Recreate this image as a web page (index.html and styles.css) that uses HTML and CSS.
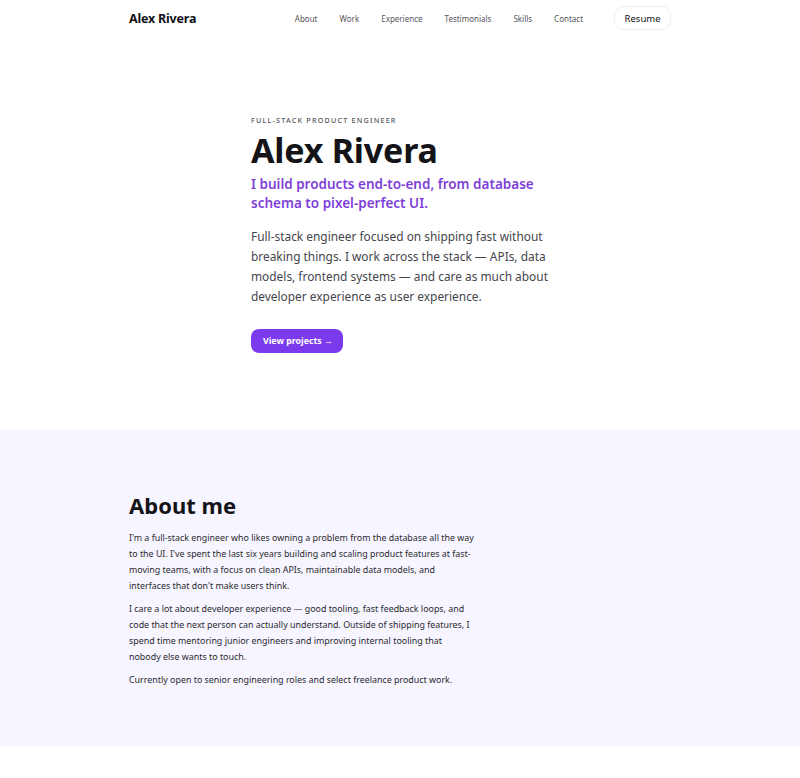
FILE: index.html
```html
<!DOCTYPE html>
<html lang="en">
<head>
<meta charset="utf-8">
<title>Alex Rivera</title>
<link rel="stylesheet" href="styles.css">
</head>
<body>
<header class="nav">
  <div class="nav-inner">
    <a class="logo" href="#">Alex Rivera</a>
    <nav class="links">
      <a href="#">About</a>
      <a href="#">Work</a>
      <a href="#">Experience</a>
      <a href="#">Testimonials</a>
      <a href="#">Skills</a>
      <a href="#">Contact</a>
    </nav>
    <a class="resume" href="#">Resume</a>
  </div>
</header>
<main>
  <section class="hero">
    <div class="hero-inner">
      <p class="eyebrow">FULL-STACK PRODUCT ENGINEER</p>
      <h1 class="title">Alex Rivera</h1>
      <p class="tagline">I build products end-to-end, from database schema to pixel-perfect UI.</p>
      <p class="lead">Full-stack engineer focused on shipping fast without breaking things. I work across the stack — APIs, data models, frontend systems — and care as much about developer experience as user experience.</p>
      <a class="btn" href="#">View projects →</a>
    </div>
  </section>
  <section class="about">
    <div class="about-inner">
      <h2 class="about-title">About me</h2>
      <p>I'm a full-stack engineer who likes owning a problem from the database all the way to the UI. I've spent the last six years building and scaling product features at fast-moving teams, with a focus on clean APIs, maintainable data models, and interfaces that don't make users think.</p>
      <p>I care a lot about developer experience — good tooling, fast feedback loops, and code that the next person can actually understand. Outside of shipping features, I spend time mentoring junior engineers and improving internal tooling that nobody else wants to touch.</p>
      <p>Currently open to senior engineering roles and select freelance product work.</p>
    </div>
  </section>
</main>
</body>
</html>
```
FILE: styles.css
```css
* { box-sizing: border-box; }
html, body { margin: 0; padding: 0; background: #ffffff; }
body {
  font-family: "Noto Sans", "Open Sans", Arial, sans-serif;
  color: #1a1a1f;
}
a { text-decoration: none; color: inherit; }
p { margin: 0; }

.nav { height: 36px; }
.nav-inner {
  width: 542px;
  margin: 0 auto;
  height: 36px;
  display: flex;
  align-items: center;
}
.logo {
  font-weight: 700;
  font-size: 12.5px;
  color: #111114;
  letter-spacing: -0.2px;
}
.links {
  display: flex;
  gap: 22px;
  margin-left: auto;
  margin-right: 31px;
  font-size: 8px;
  color: #55555c;
}
.resume {
  font-size: 9.5px;
  color: #111;
  border: 1px solid #eeeef0;
  border-radius: 9px;
  height: 24px;
  padding: 0 9.5px;
  display: flex;
  align-items: center;
}

.hero {
  height: 394px;
  padding-top: 79px;
}
.hero-inner {
  width: 298px;
  margin: 0 auto;
}
.eyebrow {
  font-size: 7.2px;
  letter-spacing: 1.2px;
  color: #55555c;
  font-weight: 500;
  line-height: 10px;
}
.title {
  margin: 5px 0 0;
  font-size: 34px;
  font-weight: 700;
  line-height: 40px;
  color: #141418;
  letter-spacing: -0.2px;
}
.tagline {
  margin-top: 5px;
  color: #7e3fd9;
  font-size: 13.5px;
  font-weight: 600;
  line-height: 19px;
}
.lead {
  margin-top: 13px;
  margin-right: -4px;
  color: #45454d;
  font-size: 11.9px;
  line-height: 20px;
}
.btn {
  display: inline-flex;
  align-items: center;
  margin-top: 23px;
  height: 24px;
  padding: 0 10px 0 12px;
  border-radius: 8px;
  background: #7c3aed;
  color: #fff;
  font-weight: 700;
  font-size: 8.8px;
}

.about {
  background: #f7f5ff;
  height: 316px;
  padding-top: 61px;
}
.about-inner {
  width: 542px;
  margin: 0 auto;
}
.about-inner p {
  max-width: 345px;
  font-size: 8.9px;
  line-height: 16px;
  color: #2a2a30;
  margin-bottom: 7px;
}
.about-title {
  margin: 0 0 11px;
  font-size: 22px;
  font-weight: 700;
  line-height: 28px;
  color: #141418;
}
```
